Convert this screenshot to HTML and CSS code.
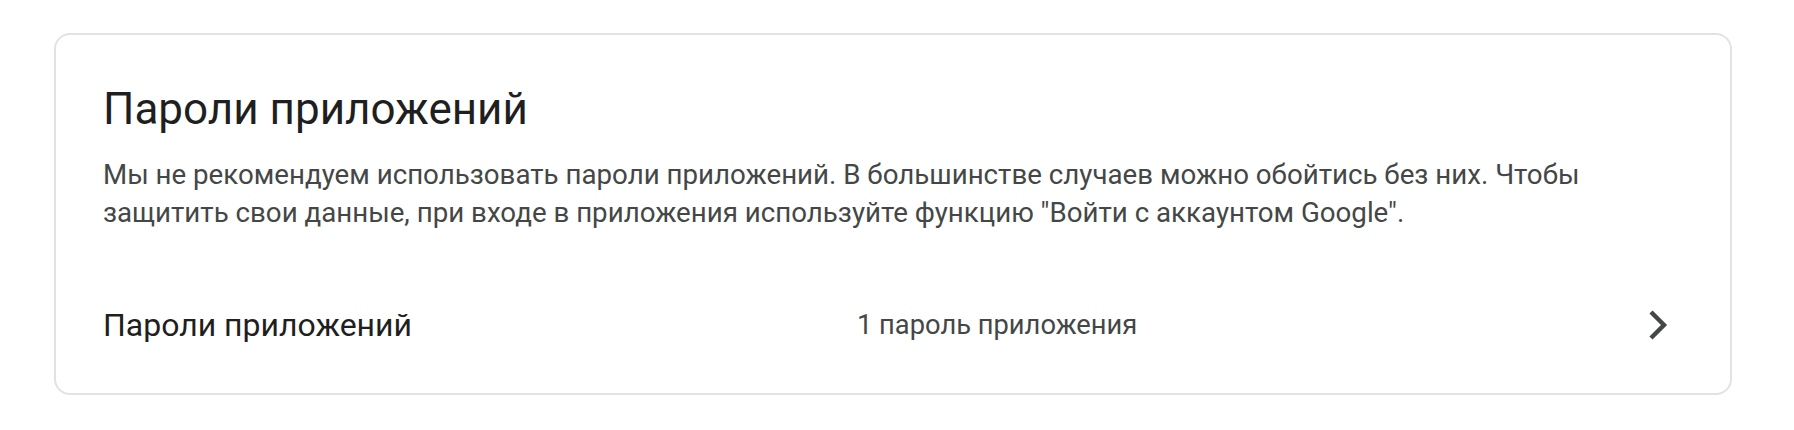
FILE: index.html
```html
<!DOCTYPE html>
<html lang="ru">
  <head>
    <meta charset="UTF-8" />
    <meta name="viewport" content="width=device-width, initial-scale=1.0" />
    <title>Пароли приложений</title>
    <link rel="stylesheet" href="styles.css">
  </head>
  <body>
    <div class="page">
      <section class="card">
        <h1>Пароли приложений</h1>
        <p class="card-desc">
          Мы не рекомендуем использовать пароли приложений. В большинстве случаев можно обойтись без них. Чтобы
          защитить свои данные, при входе в приложения используйте функцию "Войти с аккаунтом Google".
        </p>

        <a href="#" class="card-row">
          <span class="row-label">Пароли приложений</span>
          <span class="row-value">1 пароль приложения</span>
          <svg class="row-arrow" width="20" height="32" viewBox="0 0 20 32">
            <polyline points="3,3 16,16 3,29" fill="none" stroke="#444746" stroke-width="4.4" />
          </svg>
        </a>
      </section>
    </div>
  </body>
</html>
```

FILE: styles.css
```css
* {
  margin: 0;
  padding: 0;
  box-sizing: border-box;
}

:root {
  --title-color: #1f1f1f;
  --text-color: #444746;
  --border-color: #e1e3e1;
}

body {
  font-family: "Roboto", "Noto Sans", sans-serif;
  color: var(--text-color);
  background: #ffffff;
}

.page {
  padding: 33px 62px 35px 54px;
}

.card {
  border: 2px solid var(--border-color);
  border-radius: 16px;
  padding: 46px 0 0 47px;
}

.card h1 {
  font-size: 44px;
  font-weight: 400;
  line-height: 56px;
  color: var(--title-color);
}

.card-desc {
  margin-top: 19px;
  font-size: 27.7px;
  line-height: 38px;
  padding-right: 48px;
}

.card-row {
  display: grid;
  grid-template-columns: 754px 1fr auto;
  align-items: center;
  height: 136px;
  margin-top: 25px;
  padding-right: 62px;
  text-decoration: none;
  color: inherit;
}

.row-label {
  font-size: 32px;
  color: var(--title-color);
}

.row-value {
  font-size: 27.3px;
}

.row-arrow {
  display: block;
}
```
